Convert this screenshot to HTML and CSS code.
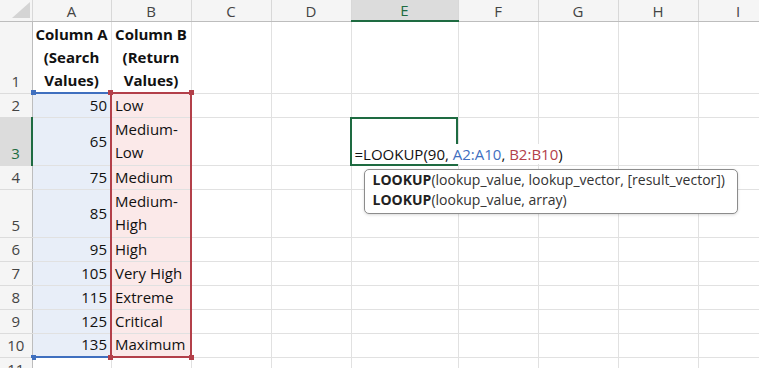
FILE: index.html
```html
<!DOCTYPE html>
<html lang="en">
<head>
  <meta charset="UTF-8">
  <title>LOOKUP example</title>
  <link rel="stylesheet" href="styles.css">
</head>
<body>

<table class="sheet">
  <colgroup>
    <col class="c-hdr"><col class="c-a"><col class="c-std"><col class="c-std"><col class="c-std">
    <col class="c-e"><col class="c-std"><col class="c-std"><col class="c-std"><col class="c-std">
  </colgroup>
  <tr class="r-head">
    <th class="corner">
      <svg width="18" height="16" viewBox="0 0 18 16"><polygon points="18,0 18,16 0,16" fill="#d4d4d4"/></svg>
    </th>
    <th>A</th><th>B</th><th>C</th><th>D</th><th class="sel">E</th><th>F</th><th>G</th><th>H</th><th>I</th>
  </tr>
  <tr class="r-3x">
    <td class="rh">1</td>
    <td class="title">Column A<br>(Search<br>Values)</td>
    <td class="title">Column B<br>(Return<br>Values)</td>
    <td></td><td></td><td></td><td></td><td></td><td></td><td></td>
  </tr>
  <tr>
    <td class="rh">2</td>
    <td class="ra first">50</td><td class="rb first">Low</td>
    <td></td><td></td><td></td><td></td><td></td><td></td><td></td>
  </tr>
  <tr class="r-2x">
    <td class="rh sel">3</td>
    <td class="ra">65</td><td class="rb wrap">Medium-<br>Low</td>
    <td></td><td></td>
    <td class="edit">
      <span class="formula">=LOOKUP(90, <span class="ref-a">A2:A10</span>, <span class="ref-b">B2:B10</span>)</span>
      <div class="tip">
        <div><b>LOOKUP</b>(lookup_value, lookup_vector, [result_vector])</div>
        <div><b>LOOKUP</b>(lookup_value, array)</div>
      </div>
    </td>
    <td></td><td></td><td></td><td></td>
  </tr>
  <tr>
    <td class="rh">4</td>
    <td class="ra">75</td><td class="rb">Medium</td>
    <td></td><td></td><td></td><td></td><td></td><td></td><td></td>
  </tr>
  <tr class="r-2x">
    <td class="rh">5</td>
    <td class="ra">85</td><td class="rb wrap">Medium-<br>High</td>
    <td></td><td></td><td></td><td></td><td></td><td></td><td></td>
  </tr>
  <tr>
    <td class="rh">6</td>
    <td class="ra">95</td><td class="rb">High</td>
    <td></td><td></td><td></td><td></td><td></td><td></td><td></td>
  </tr>
  <tr>
    <td class="rh">7</td>
    <td class="ra">105</td><td class="rb">Very High</td>
    <td></td><td></td><td></td><td></td><td></td><td></td><td></td>
  </tr>
  <tr>
    <td class="rh">8</td>
    <td class="ra">115</td><td class="rb">Extreme</td>
    <td></td><td></td><td></td><td></td><td></td><td></td><td></td>
  </tr>
  <tr>
    <td class="rh">9</td>
    <td class="ra">125</td><td class="rb">Critical</td>
    <td></td><td></td><td></td><td></td><td></td><td></td><td></td>
  </tr>
  <tr>
    <td class="rh">10</td>
    <td class="ra last">135</td><td class="rb last">Maximum</td>
    <td></td><td></td><td></td><td></td><td></td><td></td><td></td>
  </tr>
  <tr>
    <td class="rh">11</td>
    <td></td><td></td><td></td><td></td><td></td><td></td><td></td><td></td><td></td>
  </tr>
</table>

</body>
</html>
```

FILE: styles.css
```css
body {
  margin: 0;
  background: #fff;
  overflow: hidden;
  font-family: "Open Sans", sans-serif;
  font-size: 15px;
  color: #111;
}

.sheet {
  border-collapse: collapse;
  table-layout: fixed;
  width: 778px;
}

.c-hdr { width: 32px; }
.c-a { width: 79px; }
.c-std { width: 80px; }
.c-e { width: 107px; }

.sheet tr { height: 24px; }
.sheet tr.r-head { height: 21px; }
.sheet tr.r-2x { height: 48px; }
.sheet tr.r-3x { height: 72px; }

.sheet th,
.sheet td {
  padding: 0 3px;
  border-right: 1px solid #e1e1e1;
  border-bottom: 1px solid #e1e1e1;
  line-height: 21px;
  white-space: nowrap;
  overflow: visible;
  position: relative;
}

.sheet th {
  background: #f5f5f5;
  font-weight: normal;
  color: #444;
  font-size: 15px;
  line-height: 19px;
  border-right: 1px solid #d8d8d8;
  border-bottom: 1px solid #bdbdbd;
  vertical-align: bottom;
}

.sheet th.sel {
  background: #dcdcdc;
  color: #1e6b41;
  border-bottom: 2px solid #1e6b41;
}

.sheet th.corner {
  padding: 0;
  vertical-align: middle;
  text-align: right;
}

.corner svg {
  display: block;
  margin: 0 2px 0 auto;
}

.sheet td.rh {
  background: #f5f5f5;
  color: #444;
  text-align: center;
  vertical-align: bottom;
  padding: 0 0 1px;
  border-right: 1px solid #bdbdbd;
  border-bottom: 1px solid #dcdcdc;
}

.sheet td.rh.sel {
  background: #dcdcdc;
  color: #1e6b41;
  border-right: 2px solid #1e6b41;
}

.title {
  font-weight: bold;
  text-align: center;
  vertical-align: bottom;
}

.sheet td.title,
.sheet td.wrap {
  line-height: 23px;
}

/* referenced ranges */
.ra {
  background: #e8eef8;
  text-align: right;
  vertical-align: middle;
  border-bottom-color: #dde3ee;
}

.rb {
  background: #fbe9e9;
  vertical-align: middle;
  border-left: 2px solid #b3404a;
  border-right: 2px solid #b3404a !important;
  border-bottom-color: #f1dcdc;
  padding-left: 3px;
}

.ra.first { border-top: 2px solid #3f6fbf; }
.ra.last { border-bottom: 2px solid #3f6fbf; }
.rb.first { border-top: 2px solid #b3404a; }
.rb.last { border-bottom: 2px solid #b3404a; }

.ra.first::before,
.ra.last::after,
.rb.first::before,
.rb.first::after,
.rb.last::before,
.rb.last::after {
  content: "";
  position: absolute;
  width: 5px;
  height: 5px;
}

.ra.first::before { left: -2px; top: -4px; background: #3f6fbf; }
.ra.last::after { left: -2px; bottom: -4px; background: #3f6fbf; }
.rb.first::before { left: -4px; top: -4px; background: #b3404a; }
.rb.first::after { right: -4px; top: -4px; background: #b3404a; }
.rb.last::before { left: -4px; bottom: -4px; background: #b3404a; }
.rb.last::after { right: -4px; bottom: -4px; background: #b3404a; }

/* cell in edit mode */
.edit {
  vertical-align: bottom;
}

.edit::before {
  content: "";
  position: absolute;
  left: -2px;
  top: -1px;
  right: 0;
  bottom: -1px;
  border: 2px solid #1e6b41;
  pointer-events: none;
}

.formula {
  color: #111;
  background: #fff;
  position: relative;
  z-index: 2;
}

.ref-a { color: #3f6fbf; }
.ref-b { color: #b3404a; }

.tip {
  position: absolute;
  left: 12px;
  top: 51px;
  z-index: 3;
  width: 364px;
  padding: 0 0 3px 8px;
  background: #fff;
  border: 1px solid #8c8c8c;
  border-radius: 5px;
  box-shadow: 0 1px 3px rgba(0, 0, 0, 0.15);
  color: #333;
  font-size: 14px;
  line-height: 20px;
}

.tip b {
  color: #222;
}
```
